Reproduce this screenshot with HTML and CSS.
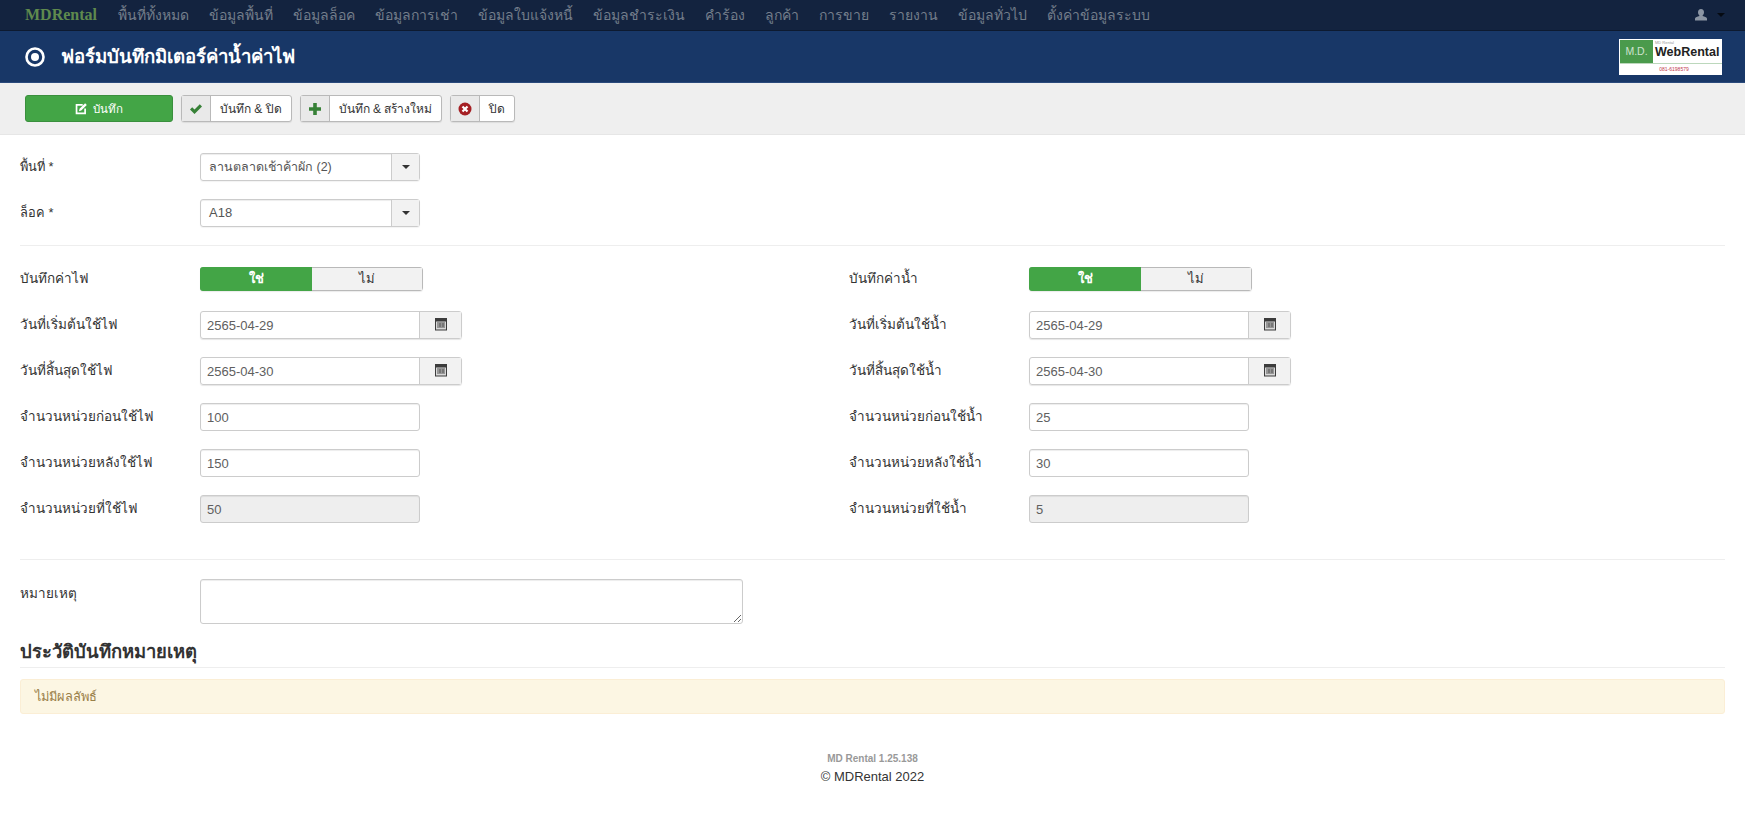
FILE: index.html
```html
<!DOCTYPE html>
<html lang="th">
<head>
<meta charset="utf-8">
<title>ฟอร์มบันทึกมิเตอร์ค่าน้ำค่าไฟ</title>
<link rel="stylesheet" href="styles.css">
</head>
<body>
<nav class="navbar">
  <a class="brand">MDRental</a>
  <ul class="menu">
    <li>พื้นที่ทั้งหมด</li><li>ข้อมูลพื้นที่</li><li>ข้อมูลล็อค</li><li>ข้อมูลการเช่า</li><li>ข้อมูลใบแจ้งหนี้</li><li>ข้อมูลชำระเงิน</li><li>คำร้อง</li><li>ลูกค้า</li><li>การขาย</li><li>รายงาน</li><li>ข้อมูลทั่วไป</li><li>ตั้งค่าข้อมูลระบบ</li>
  </ul>
  <div class="user">
    <svg class="user-icon" viewBox="0 0 14 14" width="14" height="14"><path fill="#8b95a3" d="M7 1c-2 0-3 1.400-3 3.200 0 1.300.5 2.400 1.300 3v.9C3.400 8.600 1.500 9.300 1 10.500V12.500h12v-2c-.5-1.200-2.400-1.900-4.300-2.400v-.9c.8-.6 1.300-1.700 1.300-3C10 2.400 9 1 7 1z"/></svg>
    <span class="caret caret-dark"></span>
  </div>
</nav>
<header class="subhead">
  <svg class="radio-icon" viewBox="0 0 20 20" width="20" height="20"><circle cx="10" cy="10" r="8.500" fill="none" stroke="#fff" stroke-width="2.600"/><circle cx="10" cy="10" r="4" fill="#fff"/></svg>
  <h1 class="title">ฟอร์มบันทึกมิเตอร์ค่าน้ำค่าไฟ</h1>
  <div class="logo">
    <div class="logo-top">
      <span class="logo-md">M.D.</span>
      <span class="logo-name"><small class="logo-tiny">MD Rental</small><b class="logo-web">WebRental</b></span>
    </div>
    <div class="logo-phone">081-6198579</div>
  </div>
</header>
<div class="toolbar">
  <button class="btn-save"><svg viewBox="0 0 14 14" width="12" height="12"><path fill="none" stroke="#fff" stroke-width="2" d="M9 2.200H1.800v10h10V6.500"/><path fill="#fff" d="M11.800.3l2 2L7.300 8.800 4.600 9.500l.7-2.700z"/></svg><span>บันทึก</span></button>
  <button class="btn-group"><span class="btn-ico"><svg viewBox="0 0 14 14" width="14" height="14"><path fill="#378137" d="M1 7.500l2.200-2.200 2.300 2.300L10.800 2.300 13 4.500 5.500 12z"/></svg></span><span class="btn-txt">บันทึก &amp; ปิด</span></button>
  <button class="btn-group"><span class="btn-ico"><svg viewBox="0 0 14 14" width="14" height="14"><path fill="#378137" d="M5.200 1h3.600v4.200H13v3.600H8.800V13H5.200V8.800H1V5.200h4.200z"/></svg></span><span class="btn-txt">บันทึก &amp; สร้างใหม่</span></button>
  <button class="btn-group"><span class="btn-ico"><svg viewBox="0 0 14 14" width="14" height="14"><circle cx="7" cy="7" r="6.500" fill="#a51f24"/><path stroke="#fff" stroke-width="2.200" d="M4.500 4.500l5 5M9.500 4.500l-5 5"/></svg></span><span class="btn-txt">ปิด</span></button>
</div>
<main class="content">
  <div class="row"><label class="lbl lbl-short">พื้นที่ *</label><div class="select"><span class="select-val select-thai">ลานตลาดเช้าค้าผัก (2)</span><span class="select-btn"><span class="caret"></span></span></div></div>
  <div class="row"><label class="lbl lbl-short">ล็อค *</label><div class="select"><span class="select-val">A18</span><span class="select-btn"><span class="caret"></span></span></div></div>
  <hr class="rule rule-a">
  <div class="columns">
    <section class="col">
      <div class="row row-toggle"><label class="lbl">บันทึกค่าไฟ</label><div class="toggle"><span class="tog-on">ใช่</span><span class="tog-off">ไม่</span></div></div>
      <div class="row"><label class="lbl">วันที่เริ่มต้นใช้ไฟ</label><div class="date"><input class="date-in" value="2565-04-29"><span class="date-btn"><svg viewBox="0 0 14 14" width="14" height="14"><use href="#cal"/></svg></span></div></div>
      <div class="row"><label class="lbl">วันที่สิ้นสุดใช้ไฟ</label><div class="date"><input class="date-in" value="2565-04-30"><span class="date-btn"><svg viewBox="0 0 14 14" width="14" height="14"><use href="#cal"/></svg></span></div></div>
      <div class="row"><label class="lbl">จำนวนหน่วยก่อนใช้ไฟ</label><input class="field" value="100"></div>
      <div class="row"><label class="lbl">จำนวนหน่วยหลังใช้ไฟ</label><input class="field" value="150"></div>
      <div class="row"><label class="lbl">จำนวนหน่วยที่ใช้ไฟ</label><input class="field" value="50" disabled></div>
    </section>
    <section class="col">
      <div class="row row-toggle"><label class="lbl">บันทึกค่าน้ำ</label><div class="toggle"><span class="tog-on">ใช่</span><span class="tog-off">ไม่</span></div></div>
      <div class="row"><label class="lbl">วันที่เริ่มต้นใช้น้ำ</label><div class="date"><input class="date-in" value="2565-04-29"><span class="date-btn"><svg viewBox="0 0 14 14" width="14" height="14"><use href="#cal"/></svg></span></div></div>
      <div class="row"><label class="lbl">วันที่สิ้นสุดใช้น้ำ</label><div class="date"><input class="date-in" value="2565-04-30"><span class="date-btn"><svg viewBox="0 0 14 14" width="14" height="14"><use href="#cal"/></svg></span></div></div>
      <div class="row"><label class="lbl">จำนวนหน่วยก่อนใช้น้ำ</label><input class="field" value="25"></div>
      <div class="row"><label class="lbl">จำนวนหน่วยหลังใช้น้ำ</label><input class="field" value="30"></div>
      <div class="row"><label class="lbl">จำนวนหน่วยที่ใช้น้ำ</label><input class="field" value="5" disabled></div>
    </section>
  </div>
  <hr class="rule rule-b">
  <div class="row row-note"><label class="lbl lbl-top">หมายเหตุ</label><textarea class="note"></textarea></div>
  <h2 class="history">ประวัติบันทึกหมายเหตุ</h2>
  <div class="alert">ไม่มีผลลัพธ์</div>
</main>
<footer class="foot">
  <div class="version">MD Rental 1.25.138</div>
  <div class="copy">© MDRental 2022</div>
</footer>
<svg class="defs" width="0" height="0"><defs><g id="cal"><path fill="#3c3c3c" d="M1 1h12v12.500H1z"/><path fill="#d8d8d8" d="M2 4.500h10v8H2z"/><path fill="#555" d="M3 5.500h8v1H3zM3 7.500h8v1H3zM3 9.500h8v1H3zM5.500 5.500h1v5h-1zM8.500 5.500h1v5h-1z"/></g></defs></svg>
</body>
</html>
```
FILE: styles.css
```css
* { box-sizing: border-box; }
html, body { margin: 0; padding: 0; background: #fff; }
body { font-family: "Liberation Sans", "Noto Sans", sans-serif; font-size: 13px; color: #333; width: 1745px; overflow-x: hidden; }
.defs { display: block; height: 0; }

.navbar { display: flex; align-items: center; height: 31px; padding-left: 25px; background: #13233f; border-bottom: 1px solid #0d1a30; }
.brand { width: 93px; font-family: "Liberation Serif", serif; font-weight: bold; font-size: 16px; color: #5f8a4e; }
.menu { display: flex; gap: 20px; margin: 0; padding: 0; list-style: none; font-size: 14px; color: #747e8b; }
.user { margin-left: auto; margin-right: 20px; display: flex; align-items: center; gap: 9px; }
.user-icon { display: block; }
.caret { display: inline-block; width: 0; height: 0; border-left: 4px solid transparent; border-right: 4px solid transparent; border-top: 4px solid #333; }
.caret-dark { border-top-color: #000; opacity: .7; }

.subhead { display: flex; align-items: center; height: 52px; padding: 0 23px 0 25px; background: #183767; border-bottom: 1px solid #2a4a7c; }
.radio-icon { display: block; }
.title { margin: 0 0 0 16px; font-size: 18.600px; font-weight: bold; color: #fff; }
.logo { margin-left: auto; width: 103px; height: 36px; background: #fff; padding: 1px 0 0 1px; }
.logo-top { display: flex; height: 24px; border-bottom: 1px solid #bcd8bc; }
.logo-md { width: 33px; background: #4a9a4c; color: #cfe3cf; font-size: 10.500px; line-height: 23px; text-align: center; }
.logo-name { display: flex; flex-direction: column; padding-left: 2px; }
.logo-tiny { font-size: 4px; line-height: 6px; color: #999; }
.logo-web { font-size: 12.500px; line-height: 13px; color: #222; }
.logo-phone { font-size: 5px; line-height: 10px; color: #c0394b; text-align: center; padding-left: 6px; }

.toolbar { display: flex; align-items: center; gap: 8px; height: 52px; padding-left: 25px; background: #efefef; border-bottom: 1px solid #e6e6e6; }
.btn-save { display: flex; align-items: center; justify-content: center; gap: 6px; width: 148px; height: 27px; padding: 0; background: #43a546; border: 1px solid #3a8f3d; border-radius: 3px; color: #fff; font: inherit; font-size: 11.500px; }
.btn-group { display: flex; align-items: stretch; height: 27px; padding: 0; background: #fff; border: 1px solid #b9b9b9; border-radius: 3px; color: #333; font: inherit; font-size: 12px; box-shadow: 0 1px 1px rgba(0,0,0,.08); }
.btn-ico { display: flex; align-items: center; justify-content: center; width: 29px; background: #e9e9e9; border-right: 1px solid #b9b9b9; }
.btn-txt { display: flex; align-items: center; padding: 0 9px; }

.content { padding: 18px 20px 0; }
.row { display: flex; align-items: center; margin-bottom: 18px; }
.lbl { width: 180px; flex: none; font-size: 13.500px; padding-bottom: 2px; }
.lbl-short { font-size: 12.800px; }
.lbl-top { align-self: flex-start; padding-top: 3px; }
.select { display: flex; width: 220px; height: 28px; border: 1px solid #ccc; border-radius: 3px; box-shadow: inset 0 1px 1px rgba(0,0,0,.075), 0 1px 1px rgba(0,0,0,.05); color: #555; }
.select-val { flex: 1; padding: 0 8px; line-height: 26px; }
.select-thai { font-size: 12.500px; }
.select-btn { display: flex; align-items: center; justify-content: center; width: 28px; background: #f2f2f2; border-left: 1px solid #ccc; }

.rule { border: 0; border-top: 1px solid #eee; margin: 0; }
.rule-a { margin-bottom: 21px; }
.rule-b { margin: 18px 0 19px; }

.columns { display: grid; grid-template-columns: 829px 1fr; }
.row-toggle { height: 24px; margin-bottom: 20px; }
.toggle { display: flex; width: 223px; height: 24px; border: 1px solid #b9b9b9; border-radius: 3px; box-shadow: 0 1px 1px rgba(0,0,0,.08); }
.tog-on { width: 112px; margin: -1px 0 -1px -1px; background: #43a546; color: #fff; font-weight: bold; text-align: center; line-height: 24px; border-radius: 3px 0 0 3px; }
.tog-off { flex: 1; background: #f2f2f2; text-align: center; line-height: 22px; }
.date { display: flex; width: 262px; height: 28px; border: 1px solid #ccc; border-radius: 3px; box-shadow: 0 1px 1px rgba(0,0,0,.1); }
.date-in { width: 218px; border: 0; padding: 0 6px; background: transparent; font: inherit; color: #606060; }
.date-btn { flex: 1; display: flex; align-items: center; justify-content: center; padding-bottom: 2px; background: #f2f2f2; border-left: 1px solid #ccc; }
.field { width: 220px; height: 28px; padding: 0 6px; border: 1px solid #ccc; border-radius: 3px; font: inherit; color: #606060; box-shadow: inset 0 1px 1px rgba(0,0,0,.075); background: #fff; }
.field:disabled { background: #eee; color: #606060; }

.row-note { margin-bottom: 0; }
.note { width: 543px; height: 45px; border: 1px solid #ccc; border-radius: 3px; display: block; box-shadow: inset 0 1px 1px rgba(0,0,0,.075); }
.history { margin: 13px 0 11px; padding-bottom: 1px; font-size: 18.400px; font-weight: bold; border-bottom: 1px solid #eee; color: #333; }
.alert { height: 35px; padding: 0 14px; line-height: 33px; font-size: 12.850px; background: #fcf6e3; border: 1px solid #fbeed5; border-radius: 3px; color: #9a8048; }

.foot { margin-top: 38px; text-align: center; }
.version { font-size: 10px; font-weight: bold; color: #999; line-height: 14px; }
.copy { font-size: 13px; line-height: 22px; color: #333; }
```
